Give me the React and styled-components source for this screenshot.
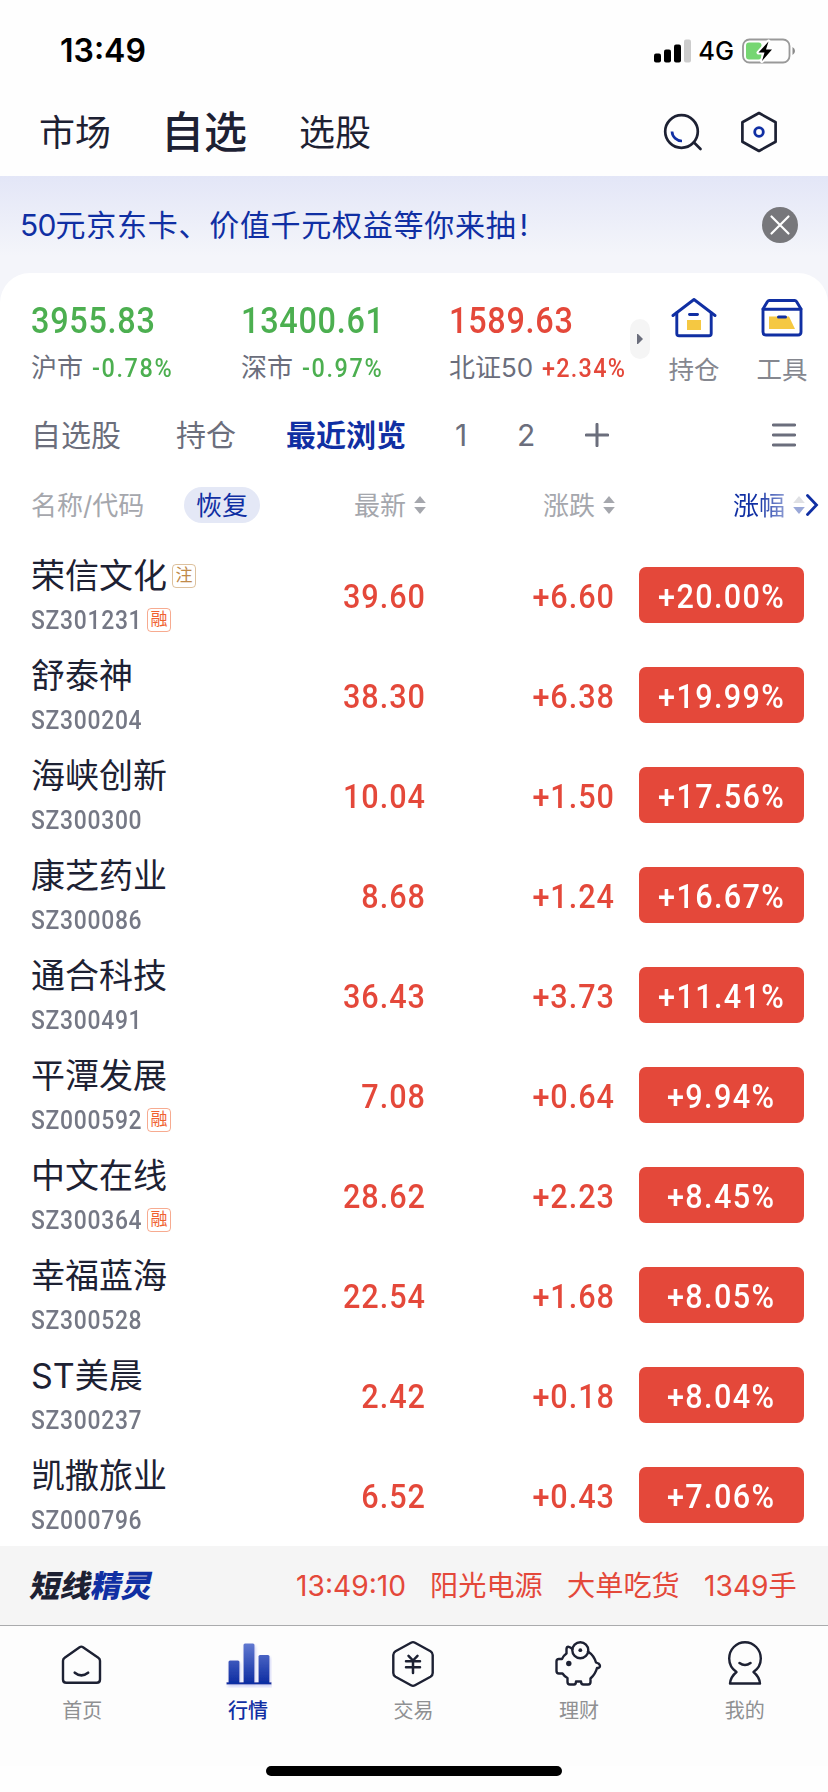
import React from "react";
import styled, { createGlobalStyle } from "styled-components";

const GlobalStyle = createGlobalStyle`
  * {
    box-sizing: border-box;
  }
  body {
    margin: 0;
    background: #fefefe;
    font-family: Inter, "Noto Sans CJK SC", sans-serif;
    color: #1d2133;
  }
  svg {
    display: block;
    flex: none;
  }
`;

const Container = styled.div`
  width: 828px;
  height: 1792px;
  display: flex;
  flex-direction: column;
  overflow: hidden;
  white-space: nowrap;
`;

const StatusBar = styled.div`
  height: 88px;
  padding: 13px 32px 0 60px;
  display: flex;
  align-items: center;
  justify-content: space-between;
  color: #000;
`;
const Clock = styled.span`
  font-size: 32px;
  font-weight: 600;
  line-height: 40px;
`;
const StatusIcons = styled.div`
  display: flex;
  align-items: center;
`;
const Network = styled.span`
  margin: 0 8px 0 6px;
  font-size: 25.5px;
  font-weight: 500;
  line-height: 30px;
`;

const NavBar = styled.div`
  height: 88px;
  padding: 0 51px 0 39px;
  display: flex;
  align-items: center;
`;
const NavItem = styled.span`
  width: ${(props) => props.$width}px;
  padding-top: ${(props) => (props.$active ? 0 : 2)}px;
  font-size: ${(props) => (props.$active ? 43 : 36)}px;
  font-weight: ${(props) => (props.$active ? 500 : 400)};
  line-height: 60px;
`;
const NavIcons = styled.div`
  margin-left: auto;
  display: flex;
  align-items: center;
  gap: 38px;
`;

const Banner = styled.div`
  height: 127px;
  margin-bottom: -30px;
  padding: 0 30px 30px 20px;
  display: flex;
  align-items: center;
  justify-content: space-between;
  background: linear-gradient(#e3e6f7 0, #f4f5fa 80px);
  color: #102fa3;
`;
const BannerText = styled.span`
  padding-top: 1px;
  font-size: 30px;
  letter-spacing: 0.72px;
  line-height: 40px;
`;
const BannerAmount = styled.span`
  letter-spacing: -0.8px;
`;
const BannerMark = styled.span`
  margin-left: 3px;
`;

const Panel = styled.div`
  height: 1273px;
  padding-top: 24px;
  background: #fff;
  border-radius: 30px 30px 0 0;
`;

const IndexBar = styled.div`
  height: 96px;
  padding-left: 31px;
  display: flex;

  & > * {
    flex: none;
  }
`;
const Index = styled.div`
  width: ${(props) => props.$width}px;
  color: ${(props) => (props.$up ? "#e4483a" : "#4caf50")};
  font-family: Roboto, sans-serif;
  font-weight: 500;
`;
const IndexValue = styled.div`
  padding-top: 2px;
  font-size: 36px;
  line-height: 44px;
  letter-spacing: 0.8px;
  transform: scaleX(0.9);
  transform-origin: left;
`;
const IndexInfo = styled.div`
  height: 50px;
  display: flex;
  align-items: center;
`;
const IndexName = styled.span`
  margin-right: 9px;
  font-family: Inter, "Noto Sans CJK SC", sans-serif;
  font-size: 26px;
  font-weight: 400;
  line-height: 40px;
  color: #6b6e7c;
`;
const IndexRate = styled.span`
  font-size: 26px;
  line-height: 40px;
  letter-spacing: ${(props) => (props.$up ? 1.4 : 1.8)}px;
  transform: scaleX(0.9);
  transform-origin: left;
`;
const More = styled.div`
  width: 20px;
  height: 40px;
  margin: 22px 19px 0 0;
  border-radius: 10px;
  background: #f5f5f5;
  display: flex;
  align-items: center;
  justify-content: center;
`;
const Shortcut = styled.div`
  width: 50px;
  margin-right: 38px;
  display: flex;
  flex-direction: column;
  align-items: center;
  font-size: 25.5px;
  line-height: 40px;
  color: #85878f;

  svg {
    margin-bottom: 11px;
  }
`;

const Tabs = styled.div`
  height: 84px;
  padding: 0 32px 0 31px;
  display: flex;
  align-items: center;
`;
const Tab = styled.span`
  width: ${(props) => props.$width}px;
  font-size: 30px;
  font-weight: ${(props) => (props.$active ? 700 : 400)};
  line-height: 40px;
  color: ${(props) => (props.$active ? "#102fa3" : "#6b6e7c")};
`;
const MenuButton = styled.div`
  margin-left: auto;
`;

const TableHead = styled.div`
  height: 56px;
  padding: 0 0 0 31px;
  display: flex;
  align-items: center;
  font-size: 26px;
  line-height: 37px;
  color: #a5a7ad;
`;
const HeadName = styled.span`
  width: 153px;
`;
const Restore = styled.span`
  width: 76px;
  height: 36px;
  border-radius: 18px;
  background: #e4e8f6;
  color: #102fa3;
  text-align: center;
`;
const HeadCell = styled.div`
  width: ${(props) => props.$width}px;
  display: flex;
  align-items: center;
  justify-content: flex-end;
  gap: 8px;
`;
const Faded = styled.span`
  background: linear-gradient(90deg, #102fa3 45%, #8b9bd3);
  background-clip: text;
  color: transparent;
`;

const List = styled.div`
  padding-top: 12px;
`;
const Row = styled.div`
  height: 100px;
  padding: 0 24px 0 31px;
  display: flex;
  align-items: center;
`;
const Stock = styled.div`
  width: 213px;
  height: 100px;
  padding-top: 7px;
`;
const StockLine = styled.div`
  height: ${(props) => props.$height}px;
  display: flex;
  align-items: center;
`;
const StockName = styled.span`
  font-size: 34px;
  line-height: 48px;
`;
const StockCode = styled.span`
  width: 126px;
  margin-right: -15px;
  font-family: Roboto, sans-serif;
  font-size: 26px;
  font-weight: 500;
  letter-spacing: 0.8px;
  line-height: 36px;
  color: #757885;
  transform: scaleX(0.88);
  transform-origin: left;
`;
const Badge = styled.span`
  width: 24px;
  height: 24px;
  margin-left: 5px;
  border: 1px solid ${(props) => props.$color}88;
  border-radius: 4px;
  color: ${(props) => props.$color};
  font-size: 17px;
  line-height: 21px;
  text-align: center;
`;
const Value = styled.span`
  width: ${(props) => props.$width}px;
  padding-top: 2px;
  text-align: right;
  font-family: Roboto, sans-serif;
  font-size: 34px;
  font-weight: 500;
  letter-spacing: 1.1px;
  line-height: 40px;
  color: #e4483a;
  transform: scaleX(0.9);
  transform-origin: right;
`;
const Rate = styled.div`
  width: 165px;
  height: 56px;
  margin-left: auto;
  border-radius: 7px;
  background: #e4483a;
  color: #fff;
  text-align: center;
  font-family: Roboto, sans-serif;
  font-size: 34px;
  font-weight: 500;
  letter-spacing: 1.5px;
  line-height: 58px;
`;
const RateText = styled.span`
  display: inline-block;
  transform: scaleX(0.9);
`;

const Ticker = styled.div`
  height: 79px;
  padding: 1px 30px 0 31px;
  display: flex;
  align-items: center;
  background: #f5f5f5;
  color: #e4483a;
  font-size: 28.2px;
  line-height: 40px;
`;
const TickerLogo = styled.span`
  width: 265px;
  color: #1d2133;
  font-size: 30.5px;
  font-weight: 900;

  b {
    font-weight: 900;
    color: #102fa3;
  }
`;
const Slanted = styled.span`
  display: inline-block;
  transform: skewX(-12deg);
`;
const TickerText = styled.span`
  width: ${(props) => props.$width}px;
`;

const TabBar = styled.div`
  height: 141px;
  border-top: 1px solid #aaabad;
  background: #fdfdfd;
  display: flex;
`;
const TabItem = styled.div`
  flex: 1;
  padding: 14px 1px 0 0;
  display: flex;
  flex-direction: column;
  align-items: center;
  font-size: 20px;
  font-weight: ${(props) => (props.$active ? 500 : 400)};
  line-height: 30px;
  color: ${(props) => (props.$active ? "#102fa3" : "#8f9092")};

  svg {
    margin-bottom: 8px;
  }
`;
const HomeIndicator = styled.div`
  width: 296px;
  height: 10px;
  margin: 0 auto;
  border-radius: 5px;
  background: #000;
`;

const stocks = [
  { name: "荣信文化", code: "SZ301231", price: "39.60", change: "+6.60", rate: "+20.00%", note: true, margin: true },
  { name: "舒泰神", code: "SZ300204", price: "38.30", change: "+6.38", rate: "+19.99%" },
  { name: "海峡创新", code: "SZ300300", price: "10.04", change: "+1.50", rate: "+17.56%" },
  { name: "康芝药业", code: "SZ300086", price: "8.68", change: "+1.24", rate: "+16.67%" },
  { name: "通合科技", code: "SZ300491", price: "36.43", change: "+3.73", rate: "+11.41%" },
  { name: "平潭发展", code: "SZ000592", price: "7.08", change: "+0.64", rate: "+9.94%", margin: true },
  { name: "中文在线", code: "SZ300364", price: "28.62", change: "+2.23", rate: "+8.45%", margin: true },
  { name: "幸福蓝海", code: "SZ300528", price: "22.54", change: "+1.68", rate: "+8.05%" },
  { name: "ST美晨", code: "SZ300237", price: "2.42", change: "+0.18", rate: "+8.04%" },
  { name: "凯撒旅业", code: "SZ000796", price: "6.52", change: "+0.43", rate: "+7.06%" },
];

const SignalIcon = () => (
  <svg width="38" height="24" viewBox="0 0 38 24">
    <rect x="0" y="14.5" width="7" height="9" rx="2" />
    <rect x="10" y="10.5" width="7" height="13" rx="2" />
    <rect x="20" y="5.5" width="7" height="18" rx="2" />
    <rect x="30" y="0.5" width="7" height="23" rx="2" fill="#ccc" />
  </svg>
);

const BatteryIcon = () => (
  <svg width="54" height="26" viewBox="0 0 54 26" fill="none">
    <rect x="1" y="1.5" width="46.5" height="23" rx="6.5" stroke="#999" strokeWidth="1.8" />
    <path d="M50.5 9v8q2.5-1.3 2.5-4t-2.5-4z" fill="#8a8a8a" />
    <rect x="4" y="4.5" width="15.5" height="17" rx="3" fill="#76d672" />
    <path
      d="M26.5 3.5 16.5 14.5h6l-2.5 8.5 10-11.5h-6z"
      fill="#000"
      stroke="#fff"
      strokeWidth="4"
      paintOrder="stroke"
      strokeLinejoin="round"
    />
  </svg>
);

const SearchIcon = () => (
  <svg width="40" height="42" viewBox="0 0 40 42" fill="none" strokeWidth="2.7">
    <circle cx="18.5" cy="20.5" r="16.3" stroke="#1d2133" />
    <path d="m31 31.5 6.5 6.5" stroke="#1d2133" strokeLinecap="round" />
    <path d="M9 20.5a10 10 0 0 0 10 9.5" stroke="#102fa3" />
  </svg>
);

const HexIcon = () => (
  <svg width="36" height="42" viewBox="0 0 36 42" fill="none">
    <path d="M18 2 34.6 11.3v19.4L18 40 1.4 30.7V11.3z" stroke="#1d2133" strokeWidth="2.7" strokeLinejoin="round" />
    <circle cx="18" cy="21" r="4.3" stroke="#102fa3" strokeWidth="2.8" />
  </svg>
);

const CloseIcon = () => (
  <svg width="36" height="36" viewBox="0 0 36 36">
    <circle cx="18" cy="18" r="18" fill="#77777b" />
    <path d="m9.5 9.5 17 17m0-17-17 17" stroke="#fff" strokeWidth="2.2" strokeLinecap="round" />
  </svg>
);

const HouseIcon = () => (
  <svg width="46" height="42" viewBox="0 0 46 42" fill="none">
    <g stroke="#102fa3" strokeWidth="2.9" strokeLinecap="round" strokeLinejoin="round">
      <path d="M2 18.5 23 2.5l21 16" />
      <path d="M5.8 16V36.5q0 2.300 2.300 2.300h29.800q2.300 0 2.300-2.300V16" />
      <path d="M18.500 17.500h8" />
    </g>
    <path d="M16 23h14v10H16z" fill="#f5c842" />
  </svg>
);

const BoxIcon = () => (
  <svg width="42" height="42" viewBox="0 0 42 42" fill="none">
    <path d="M8 19.500h20L34 32H8z" fill="#f5c842" />
    <g stroke="#102fa3" strokeWidth="2.9" strokeLinecap="round" strokeLinejoin="round">
      <path d="M2 12.2h38V35q0 3-3 3H5q-3 0-3-3z" />
      <path d="M2 12 6.500 4.500Q7.200 3.500 8.200 3.500h25.600q1 0 1.700 1L40 12" />
      <path d="M17.500 20h7" strokeWidth="3" />
    </g>
  </svg>
);

const PlusIcon = () => (
  <svg width="24" height="24" viewBox="0 0 24 24">
    <path d="M12 1.3v21.4M1.3 12h21.4" stroke="#6b6e7c" strokeWidth="3" strokeLinecap="round" />
  </svg>
);

const MenuIcon = () => (
  <svg width="24" height="24" viewBox="0 0 24 24">
    <path d="M1.3 2h21.4M1.3 12h21.4M1.3 22h21.4" stroke="#6b6e7c" strokeWidth="2.8" strokeLinecap="round" />
  </svg>
);

const SortIcon = ({ up = "#a5a7ad", down = "#a5a7ad" }) => (
  <svg width="12" height="18" viewBox="0 0 12 18">
    <path d="M6 0 11.8 7H.2z" fill={up} />
    <path d="M6 18 .2 11h11.6z" fill={down} />
  </svg>
);

const HomeIcon = () => (
  <svg width="48" height="48" viewBox="0.7 -0.5 48 48" fill="none" stroke="#1d2133" strokeWidth="2.4" strokeLinecap="round" strokeLinejoin="round">
    <path d="M22.3 6.7q1.7-1.2 3.4 0L41 17.3q1.7 1.2 1.7 3V39q0 3.3-3.3 3.3H9Q5.7 42.3 5.7 39V20.3q0-1.8 1.7-3z" />
    <path d="M17.5 32.2q6.5 5.2 13.3 0" strokeWidth="2.7" />
  </svg>
);

const ChartIcon = () => (
  <svg width="48" height="48" viewBox="-0.5 0 48 48">
    <defs>
      <linearGradient id="bars" gradientUnits="userSpaceOnUse" x1="0" y1="4" x2="0" y2="42">
        <stop offset="0" stopColor="#6078d0" />
        <stop offset="1" stopColor="#102fa3" />
      </linearGradient>
      <filter id="glow" x="-10%" y="-10%" width="125%" height="125%">
        <feDropShadow dx="1" dy="2" stdDeviation="1.5" floodColor="#c9cdf6" />
      </filter>
    </defs>
    <g fill="url(#bars)" filter="url(#glow)">
      <path d="M4 43V22q0-1.5 1.5-1.5h8q1.5 0 1.5 1.5v21z" />
      <path d="M19 43V5q0-1.5 1.5-1.5h8Q30 3.5 30 5v38z" />
      <path d="M34 43V16.5q0-1.5 1.5-1.5h8q1.5 0 1.5 1.5V43z" />
      <path d="M2 42.2h45v2.3H2z" />
    </g>
  </svg>
);

const TradeIcon = () => (
  <svg width="48" height="48" viewBox="0 0 48 48" fill="none" stroke="#1d2133" strokeWidth="2.4" strokeLinecap="round" strokeLinejoin="round">
    <path d="M22 2.7q2-1.1 4 0l15.5 8.5q2.2 1.3 2.2 3.8v18q0 2.5-2.2 3.800L26 45.300q-2 1.100-4 0L6.500 36.800Q4.300 35.500 4.300 33V15q0-2.500 2.200-3.800z" />
    <path d="m19.500 15.800 4.500 4.700 4.500-4.700M17 21.300h14M17 27.300h14M24 21v12" strokeWidth="2.5" />
  </svg>
);

const PigIcon = () => (
  <svg width="48" height="48" viewBox="0.5 0 48 48" fill="none" stroke="#1d2133" strokeWidth="2.4" strokeLinecap="round" strokeLinejoin="round">
    <path d="M18 9q-5.500-4.500-6 0v4.500q-3 2-4.500 5.500H4.500Q2 19 2 21.500V31q0 2.500 2.500 2.500H8q2 3 5 4.500v4q0 2.500 2.500 2.500h4q2 0 2-3h5q0 3 2.500 3h4.500q2.500 0 2.500-2.500v-3.500q5-4.500 6.500-10.500h1.500q3-2 0-4.500l-2.500-1Q39.500 15.500 33.500 11.500" />
    <circle cx="25.8" cy="10.2" r="8" />
    <circle cx="25.8" cy="10.2" r="1.9" fill="#1d2133" stroke="none" />
    <circle cx="14.3" cy="23.5" r="2.7" fill="#1d2133" stroke="none" />
  </svg>
);

const MeIcon = () => (
  <svg width="48" height="48" viewBox="0 0 48 48" fill="none" stroke="#1d2133" strokeWidth="2.4" strokeLinecap="round" strokeLinejoin="round">
    <path d="M15.5 32Q8.200 27 8.200 18.500a15.800 16.300 0 0 1 31.600 0q0 8.500-7.300 13.500 6 5 6.500 11.500H9q.5-6.500 6.500-11.500z" />
    <path d="M18.500 23q5.500 4 11 0" strokeWidth="2.6" />
  </svg>
);

const App = () => {
  return (
    <>
      <GlobalStyle />
      <Container>
        <StatusBar>
          <Clock>13:49</Clock>
          <StatusIcons>
            <SignalIcon />
            <Network>4G</Network>
            <BatteryIcon />
          </StatusIcons>
        </StatusBar>

        <NavBar>
          <NavItem $width={122}>市场</NavItem>
          <NavItem $width={138} $active>
            自选
          </NavItem>
          <NavItem $width={100}>选股</NavItem>
          <NavIcons>
            <SearchIcon />
            <HexIcon />
          </NavIcons>
        </NavBar>

        <Banner>
          <BannerText>
            <BannerAmount>50</BannerAmount>元京东卡、价值千元权益等你来抽
            <BannerMark>!</BannerMark>
          </BannerText>
          <CloseIcon />
        </Banner>

        <Panel>
          <IndexBar>
            <Index $width={210}>
              <IndexValue>3955.83</IndexValue>
              <IndexInfo>
                <IndexName>沪市</IndexName>
                <IndexRate>-0.78%</IndexRate>
              </IndexInfo>
            </Index>
            <Index $width={208}>
              <IndexValue>13400.61</IndexValue>
              <IndexInfo>
                <IndexName>深市</IndexName>
                <IndexRate>-0.97%</IndexRate>
              </IndexInfo>
            </Index>
            <Index $width={181} $up>
              <IndexValue>1589.63</IndexValue>
              <IndexInfo>
                <IndexName>北证50</IndexName>
                <IndexRate $up>+2.34%</IndexRate>
              </IndexInfo>
            </Index>
            <More>
              <svg width="6" height="10" viewBox="0 0 6 10">
                <path d="M0 0h1l5 5-5 5H0z" fill="#6b6e7c" />
              </svg>
            </More>
            <Shortcut>
              <HouseIcon />
              持仓
            </Shortcut>
            <Shortcut>
              <BoxIcon />
              工具
            </Shortcut>
          </IndexBar>

          <Tabs>
            <Tab $width={145}>自选股</Tab>
            <Tab $width={110}>持仓</Tab>
            <Tab $width={169} $active>
              最近浏览
            </Tab>
            <Tab $width={62}>1</Tab>
            <Tab $width={68}>2</Tab>
            <PlusIcon />
            <MenuButton>
              <MenuIcon />
            </MenuButton>
          </Tabs>

          <TableHead>
            <HeadName>名称/代码</HeadName>
            <Restore>恢复</Restore>
            <HeadCell $width={166}>
              最新
              <SortIcon />
            </HeadCell>
            <HeadCell $width={189}>
              涨跌
              <SortIcon />
            </HeadCell>
            <HeadCell $width={190}>
              <Faded>涨幅</Faded>
              <SortIcon up="#dfe0e4" down="#9aa8d8" />
            </HeadCell>
            <svg width="14" height="24" viewBox="0 0 14 24">
              <path d="m2.5 2.5 9 9.5-9 9.5" fill="none" stroke="#102fa3" strokeWidth="2.8" strokeLinecap="round" />
            </svg>
          </TableHead>

          <List>
            {stocks.map((stock) => (
              <Row key={stock.code}>
                <Stock>
                  <StockLine $height={48}>
                    <StockName>{stock.name}</StockName>
                    {stock.note && <Badge $color="#c08a4a">注</Badge>}
                  </StockLine>
                  <StockLine $height={40}>
                    <StockCode>{stock.code}</StockCode>
                    {stock.margin && <Badge $color="#f0622f">融</Badge>}
                  </StockLine>
                </Stock>
                <Value $width={182}>{stock.price}</Value>
                <Value $width={189}>{stock.change}</Value>
                <Rate>
                  <RateText>{stock.rate}</RateText>
                </Rate>
              </Row>
            ))}
          </List>
        </Panel>

        <Ticker>
          <TickerLogo>
            <Slanted>
              短线<b>精灵</b>
            </Slanted>
          </TickerLogo>
          <TickerText $width={134}>13:49:10</TickerText>
          <TickerText $width={137}>阳光电源</TickerText>
          <TickerText $width={137}>大单吃货</TickerText>
          <TickerText>1349手</TickerText>
        </Ticker>

        <TabBar>
          <TabItem>
            <HomeIcon />
            首页
          </TabItem>
          <TabItem $active>
            <ChartIcon />
            行情
          </TabItem>
          <TabItem>
            <TradeIcon />
            交易
          </TabItem>
          <TabItem>
            <PigIcon />
            理财
          </TabItem>
          <TabItem>
            <MeIcon />
            我的
          </TabItem>
        </TabBar>
        <HomeIndicator />
      </Container>
    </>
  );
};

export default App;
